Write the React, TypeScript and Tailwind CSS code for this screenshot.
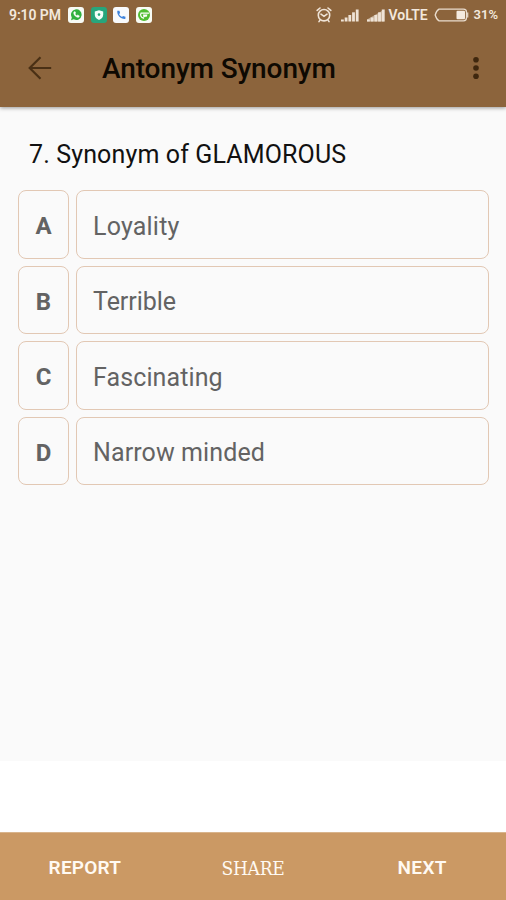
import type { ReactNode } from "react";

const OPTIONS = [
  { key: "A", text: "Loyality", tracking: "tracking-[0.2px]" },
  { key: "B", text: "Terrible", tracking: "tracking-[-0.05px]" },
  { key: "C", text: "Fascinating", tracking: "tracking-[0.1px]" },
  { key: "D", text: "Narrow minded", tracking: "tracking-[0.1px]" },
];

function AppBadge({ bg, children }: { bg: string; children: ReactNode }) {
  return (
    <span className={`flex h-4 w-4 items-center justify-center rounded-[3px] ${bg}`}>
      <svg width="16" height="16" viewBox="0 0 16 16">{children}</svg>
    </span>
  );
}

function Signal({ dense = false }: { dense?: boolean }) {
  return (
    <svg width="18" height="13" viewBox="0 0 18 13" fill="#efe3d6">
      {dense && <path d="M0 12.5v-2L17.400 0.500v12z" opacity="0.550" />}
      <rect x="0" y="10.5" width="2.8" height="2" />
      <rect x="3.7" y="8.5" width="2.8" height="4" />
      <rect x="7.4" y="6" width="2.8" height="6.5" />
      <rect x="11.1" y="3.3" width="2.8" height="9.2" />
      <rect x="14.8" y="0.5" width="2.8" height="12" />
    </svg>
  );
}

function StatusBar() {
  return (
    <div className="flex h-[30px] items-center pl-[9px] pr-[8px] text-[14px] font-semibold text-[#f3e8dc]">
      <span className="w-[59px] whitespace-nowrap tracking-[-0.1px]">9:10 PM</span>
      <div className="flex gap-[6.5px]">
        <AppBadge bg="bg-[#f7faf5]">
          <path d="M3 13.2l.8-2.8a5.3 5.3 0 1 1 2 1.9z" fill="#30b03f" />
          <path d="M5.8 5.2c-.5 2.600 2.400 5.500 5 5l.6-1.300-1.700-.9-.9.7c-.9-.3-1.500-1-1.800-1.800l.7-.8-.7-1.600z" fill="#fff" stroke="#fff" strokeWidth="0.500" />
        </AppBadge>
        <AppBadge bg="bg-[#27a67c]">
          <path d="M8 3.200l4.200 1.400v3.200c0 2.400-1.800 4.200-4.200 5.200-2.400-1-4.200-2.800-4.200-5.200V4.600z" fill="#f4fffa" />
          <circle cx="8" cy="7.600" r="1.300" fill="#27a67c" />
        </AppBadge>
        <AppBadge bg="bg-[#f8fafc]">
          <path d="M4.300 3.800c-.4 4.700 3.200 8.500 8 8.200l.2-2.300-2.500-.8-1 1.100C7.600 9.300 6.700 8.400 6.100 7.100l1-1-.7-2.400z" fill="#3d83dc" />
        </AppBadge>
        <AppBadge bg="bg-[#f8fbf4]">
          <circle cx="8" cy="8" r="6" fill="#50bd32" />
          <path d="M5 6.200h7.500M5 6.200c-1 2 .1 4.600 2.500 5" fill="none" stroke="#fff" strokeWidth="1.200" strokeLinecap="round" />
          <path d="M7 7.500h4.500l-.8 2.300H8.900l-1.400 1.200z" fill="#fff" />
        </AppBadge>
      </div>
      <div className="ml-auto flex items-center">
        <svg className="mr-[9px]" width="16" height="16" viewBox="0 0 16 16" fill="none" stroke="#efe3d6" strokeWidth="1.600" strokeLinecap="round">
          <circle cx="8" cy="8.200" r="5.700" />
          <path d="M1.200 3.400L4 1M14.800 3.400L12 1M5 7.100L8 9.300l3-2.200M4 13.100l-1 1.500M12 13.100l1 1.500" />
        </svg>
        <Signal />
        <span className="w-[8px]" />
        <Signal dense />
        <span className="ml-[4px] w-[45px]">VoLTE</span>
        <svg className="mr-[5px]" width="35" height="14" viewBox="0 0 35 14">
          <path d="M5 1.200H29.500a3 3 0 0 1 3 3v5.600a3 3 0 0 1-3 3H5Q2.500 11.500 1.200 7Q2.500 2.500 5 1.200z" fill="none" stroke="#e9dccd" strokeWidth="1.300" />
          <rect x="22.500" y="2.800" width="8.500" height="8.400" rx="1" fill="#f5ebe0" />
          <path d="M33.700 4.500v5" stroke="#e9dccd" strokeWidth="1.200" />
        </svg>
        <span className="text-[13px]">31%</span>
      </div>
    </div>
  );
}

function Toolbar() {
  return (
    <div className="flex h-[77px] items-center pb-px pl-[28px] pr-[26px]">
      <svg width="24" height="24" viewBox="0 0 24 24" fill="none" stroke="#4a3015" strokeWidth="2.200">
        <path d="M23.200 12H2M12.500 1.200L1.700 12l10.800 10.800" />
      </svg>
      <h1 className="ml-[50px] whitespace-nowrap pt-[2px] text-[28px] font-medium leading-none tracking-[-0.1px] text-[#0e0902]">
        Antonym Synonym
      </h1>
      <svg className="ml-auto" width="8" height="24" viewBox="0 0 8 24" fill="#3f270e">
        <circle cx="4" cy="3.700" r="2.800" />
        <circle cx="4" cy="12" r="2.800" />
        <circle cx="4" cy="20.300" r="2.800" />
      </svg>
    </div>
  );
}

export default function App() {
  return (
    <div className="flex h-[900px] w-[506px] flex-col overflow-hidden bg-white font-['Roboto',sans-serif]">
      <header className="relative h-[107px] shrink-0 bg-[#8c643c] shadow-[0_1px_4px_rgba(0,0,0,0.4)]">
        <StatusBar />
        <Toolbar />
      </header>

      <main className="h-[654px] shrink-0 bg-[#fafafa] pl-[18px] pr-[17px] pt-[32px]">
        <h2 className="h-[51px] whitespace-nowrap pl-[11px] text-[25px] leading-[32px] tracking-[0.13px] text-[#111]">
          7. Synonym of GLAMOROUS
        </h2>
        <div className="flex flex-col gap-[7px]">
          {OPTIONS.map((o) => (
            <div key={o.key} className="flex h-[68.6px] gap-[7px] text-[#636363]">
              <div className="flex w-[51px] items-center justify-center rounded-[8px] border-[1.5px] border-[#e2c8b4] pt-[4px] text-[24px] font-bold">
                {o.key}
              </div>
              <div className={`flex flex-1 items-center rounded-[8px] border-[1.5px] border-[#e2c8b4] pl-[16px] pt-[4px] text-[25px] ${o.tracking}`}>
                {o.text}
              </div>
            </div>
          ))}
        </div>
      </main>

      <footer className="mt-auto grid h-[68px] grid-cols-3 items-center border-t border-[#d9b48c] bg-[#cb9964] pt-[3px] text-center text-[19px] font-semibold text-[#fffaf3]">
        <button type="button" className="pl-px tracking-[0.2px]">REPORT</button>
        <button type="button" className="font-['DejaVu_Serif_Condensed','DejaVu_Serif',serif] text-[19px] font-normal tracking-[-0.3px] [font-stretch:condensed]">SHARE</button>
        <button type="button" className="pl-px tracking-[0.4px]">NEXT</button>
      </footer>
    </div>
  );
}
